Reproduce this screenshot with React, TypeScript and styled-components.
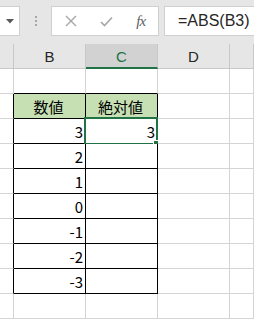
import React from "react";
import styled, { createGlobalStyle } from "styled-components";

const Global = createGlobalStyle`
  html, body { margin: 0; padding: 0; background: #ffffff; }
  body { font-family: "Noto Sans CJK JP", "Liberation Sans", sans-serif; overflow: hidden; }
`;

const Page = styled.div`
  width: 254px;
  height: 319px;
  overflow: hidden;
  display: flex;
  flex-direction: column;
`;

const Toolbar = styled.div`
  height: 46px;
  background: #e6e6e6;
  display: flex;
  align-items: flex-start;
  padding-top: 6px;
  box-sizing: border-box;
`;

const Box = styled.div<{ $w?: number }>`
  height: 30px;
  background: #ffffff;
  border: 1px solid #d0d0d0;
  box-sizing: border-box;
  display: flex;
  align-items: center;
  ${(p) => (p.$w ? `width: ${p.$w}px;` : "flex: 1;")}
`;

const NameBox = styled(Box)`
  border-left: none;
  justify-content: center;
`;

const Grip = styled.div`
  width: 31px;
  height: 30px;
  display: flex;
  flex-direction: column;
  align-items: center;
  justify-content: center;
  gap: 2px;
  & > span {
    width: 2px;
    height: 2px;
    background: #a6a6a6;
  }
`;

const IconSlot = styled.div`
  width: 36px;
  display: flex;
  justify-content: center;
  align-items: center;
`;

const Fx = styled.span`
  font-family: "Liberation Serif", serif;
  font-style: italic;
  font-size: 15px;
  color: #606060;
  letter-spacing: -1px;
`;

const FormulaBox = styled(Box)`
  margin-left: 5px;
  border-right: none;
  padding-left: 13px;
  font-family: "Liberation Sans", sans-serif;
  font-size: 16px;
  color: #262626;
`;

const Grid = styled.div`
  display: grid;
  grid-template-columns: 14px 72px 72px 72px 1fr;
  grid-auto-rows: 25px;
  font-family: "Noto Sans CJK JP", "Liberation Sans", sans-serif;
`;

const HeadCell = styled.div<{ $sel?: boolean }>`
  box-sizing: border-box;
  background: ${(p) => (p.$sel ? "#d2d2d2" : "#e6e6e6")};
  border-right: 1px solid #c8c8c8;
  border-bottom: ${(p) => (p.$sel ? "2px solid #217346" : "1px solid #c8c8c8")};
  color: ${(p) => (p.$sel ? "#217346" : "#262626")};
  font-family: "Liberation Sans", sans-serif;
  font-size: 15px;
  display: flex;
  align-items: center;
  justify-content: center;
  padding-top: 1px;
`;

const Cell = styled.div<{ $rb?: boolean; $bb?: boolean; $head?: boolean; $center?: boolean }>`
  position: relative;
  box-sizing: border-box;
  background: ${(p) => (p.$head ? "#c6e0b4" : "#ffffff")};
  border-right: 1px solid ${(p) => (p.$rb ? "#000000" : "#d4d4d4")};
  border-bottom: 1px solid ${(p) => (p.$bb ? "#000000" : "#d4d4d4")};
  font-size: 15px;
  color: #000000;
  display: flex;
  align-items: center;
  justify-content: ${(p) => (p.$center ? "center" : "flex-end")};
  padding-right: 2px;
  padding-top: 1px;
  line-height: 1;
`;

const Selection = styled.div`
  position: absolute;
  left: -2px;
  top: -2px;
  right: -1px;
  bottom: -2px;
  border: 2px solid #217346;
  pointer-events: none;
`;

const Handle = styled.div`
  position: absolute;
  right: -4px;
  bottom: -4px;
  width: 5px;
  height: 5px;
  background: #217346;
  border: 1px solid #ffffff;
`;

const values = ["3", "2", "1", "0", "-1", "-2", "-3"];

export default function App() {
  return (
    <Page>
      <Global />
      <Toolbar>
        <NameBox $w={20}>
          <svg width="8" height="5" viewBox="0 0 8 5">
            <path d="M0 0 H8 L4 4.5 Z" fill="#595959" />
          </svg>
        </NameBox>
        <Grip>
          <span />
          <span />
          <span />
        </Grip>
        <Box $w={108}>
          <IconSlot style={{ marginLeft: 2 }}>
            <svg width="12" height="12" viewBox="0 0 12 12">
              <path d="M1 1 L11 11 M11 1 L1 11" stroke="#a6a6a6" strokeWidth="1.4" />
            </svg>
          </IconSlot>
          <IconSlot>
            <svg width="13" height="11" viewBox="0 0 13 11">
              <path d="M1 6 L4.5 9.5 L12 1.5" stroke="#a6a6a6" strokeWidth="1.6" fill="none" />
            </svg>
          </IconSlot>
          <IconSlot>
            <Fx>fx</Fx>
          </IconSlot>
        </Box>
        <FormulaBox>=ABS(B3)</FormulaBox>
      </Toolbar>
      <Grid>
        <HeadCell />
        <HeadCell>B</HeadCell>
        <HeadCell $sel>C</HeadCell>
        <HeadCell>D</HeadCell>
        <HeadCell />

        <Cell />
        <Cell $bb />
        <Cell $bb />
        <Cell />
        <Cell />

        <Cell $rb />
        <Cell $head $center $rb $bb>数値</Cell>
        <Cell $head $center $rb $bb>絶対値</Cell>
        <Cell />
        <Cell />

        {values.map((v, i) => (
          <React.Fragment key={v}>
            <Cell $rb />
            <Cell $rb $bb>{v}</Cell>
            <Cell $rb $bb>
              {i === 0 ? "3" : ""}
              {i === 0 && (
                <Selection>
                  <Handle />
                </Selection>
              )}
            </Cell>
            <Cell />
            <Cell />
          </React.Fragment>
        ))}

        <Cell />
        <Cell />
        <Cell />
        <Cell />
        <Cell />
      </Grid>
    </Page>
  );
}
